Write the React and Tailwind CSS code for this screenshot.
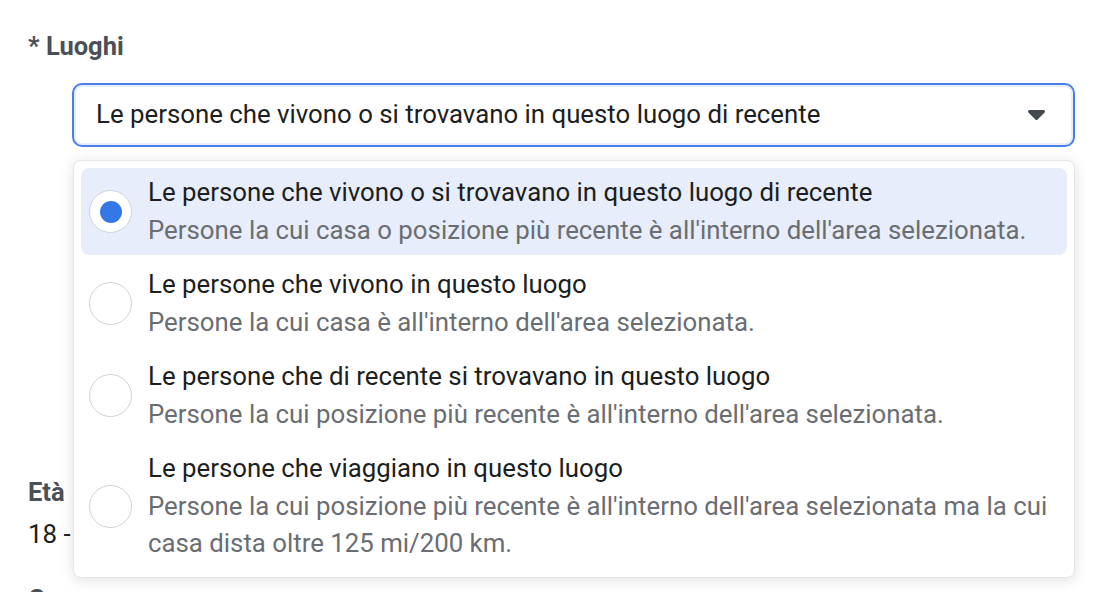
import React from 'react';

const options = [
  {
    title: 'Le persone che vivono o si trovavano in questo luogo di recente',
    desc: "Persone la cui casa o posizione più recente è all'interno dell'area selezionata.",
    checked: true,
  },
  {
    title: 'Le persone che vivono in questo luogo',
    desc: "Persone la cui casa è all'interno dell'area selezionata.",
  },
  {
    title: 'Le persone che di recente si trovavano in questo luogo',
    desc: "Persone la cui posizione più recente è all'interno dell'area selezionata.",
  },
  {
    title: 'Le persone che viaggiano in questo luogo',
    desc: "Persone la cui posizione più recente è all'interno dell'area selezionata ma la cui casa dista oltre 125 mi/200 km.",
  },
];

function Radio({ checked }) {
  return (
    <div className="w-[43px] h-[43px] shrink-0 rounded-full border-[1.5px] border-[#cfd2d6] bg-white flex items-center justify-center">
      {checked && <div className="w-[22px] h-[22px] rounded-full bg-[#3578e5]" />}
    </div>
  );
}

export default function App() {
  return (
    <div className="relative h-[592px] overflow-hidden bg-white font-['Roboto',sans-serif]">
      <div className="pl-[28px] pt-[31px]">
        <div className="text-[25.5px] leading-[30px] font-bold text-[#4b4f56]">* Luoghi</div>

        {/* select + open menu */}
        <div className="relative ml-[44px] mt-[22px] w-[1003px]">
          <div className="h-[64px] rounded-[10px] border-2 border-[#4a80e6] shadow-[inset_0_0_0_2px_#e5ecfb] bg-white flex items-center justify-between pl-[22px] pr-[28px]">
            <span className="text-[25.8px] leading-[37.5px] text-[#1c1e21]">
              Le persone che vivono o si trovavano in questo luogo di recente
            </span>
            <svg width="17" height="10" viewBox="0 0 17 10">
              <path
                d="M1.5 0h14a1.5 1.5 0 0 1 1.1 2.5l-7 7.1a1.5 1.5 0 0 1-2.2 0l-7-7.1A1.5 1.5 0 0 1 1.5 0z"
                fill="#444950"
              />
            </svg>
          </div>

          <div className="absolute left-[1px] top-[77px] w-[1002px] z-10 rounded-[8px] border border-[#e4e6eb] bg-white shadow-[0_2px_14px_rgba(0,0,0,0.13)] px-[7px] pt-[7px] pb-[8px] flex flex-col gap-[5px]">
            {options.map((o) => (
              <div
                key={o.title}
                className={
                  'flex items-center rounded-[8px] py-[6px] pl-[8px] pr-[12px] ' +
                  (o.checked ? 'bg-[#e7edfa]' : '')
                }
              >
                <Radio checked={o.checked} />
                <div className="ml-[16px] text-[25.8px] leading-[37.5px]">
                  <div className="text-[#1c1e21]">{o.title}</div>
                  <div className="text-[#6a6d72]">{o.desc}</div>
                </div>
              </div>
            ))}
          </div>
        </div>

        {/* form content under the menu */}
        <div className="mt-[330px] text-[25.5px] leading-[30px] font-bold text-[#4b4f56]">Età</div>
        <div className="mt-[9px] text-[25.8px] leading-[37.5px] text-[#1c1e21]">18 - 65+</div>
        <div className="mt-[30px] text-[25.5px] leading-[30px] font-bold text-[#4b4f56]">Genere</div>
      </div>
    </div>
  );
}
